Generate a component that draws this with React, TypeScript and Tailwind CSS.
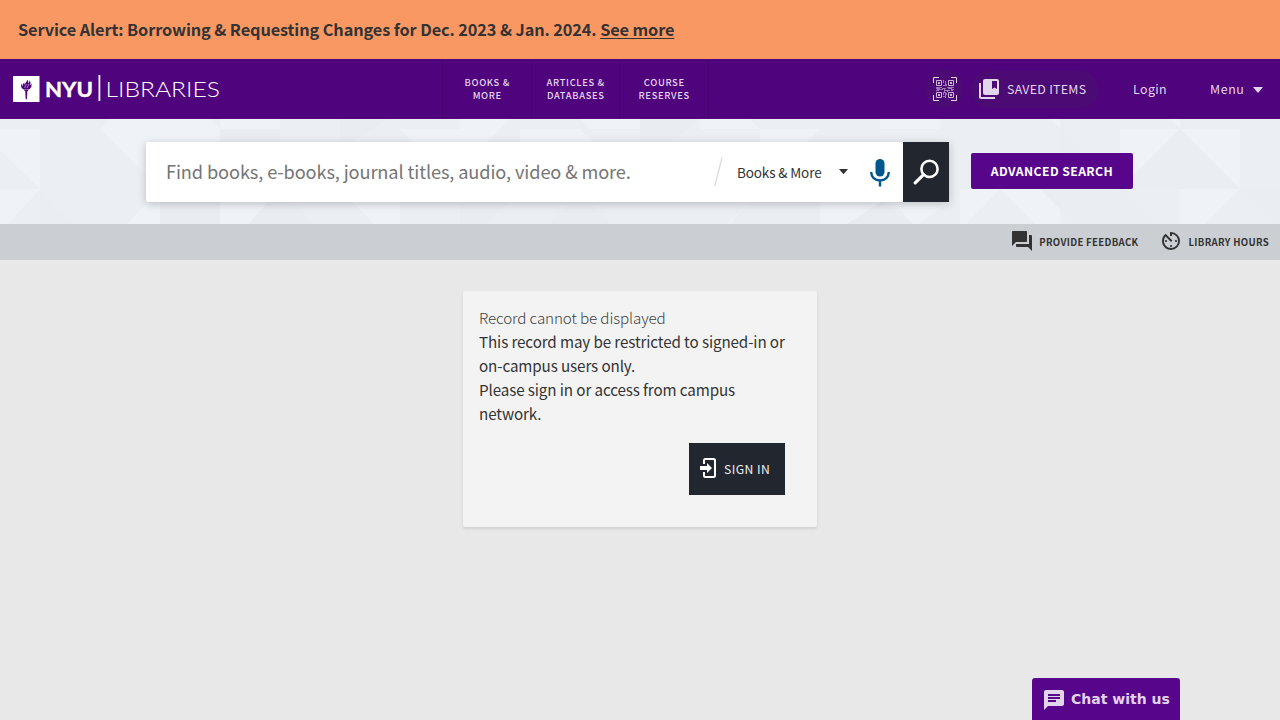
import { MdAvTimer, MdChat, MdCollectionsBookmark, MdForum } from "react-icons/md";

function Logo() {
  return (
    <svg width="208" height="28" viewBox="0 0 208 28" className="block" role="img" aria-label="NYU Libraries">
      <rect x="0" y="1" width="26.500" height="26" fill="#fff" />
      <g fill="#4f037c">
        <path d="M11 14.800h4.600l-.7 1.200h-.5l-.5 8.200h-1.200l-.5-8.200h-.5z" />
        <path d="M9 8.500c-1.500 1.500-1.300 4.500 1.600 6h5.400c2.500-1.500 3-3.800 2.400-6.500-.3 1.500-.9 2-1.500 2.300.9-2 .7-3.500-.3-5-.1 1.500-.6 2.400-1.500 3.100.3-1.500 0-2.700-1-3.600-.1 2.400-2.200 3.200-2.400 5-.5-.7-.5-1.500-.2-2.400-1.500 1-2 2.500-1.700 3.900-.8-.7-1-1.700-.8-2.800z" />
      </g>
      <path d="M11.500 13l2-4M14 13l2-4" stroke="#fff" strokeWidth=".5" />
      <text x="32" y="21.500" textLength="48" lengthAdjust="spacingAndGlyphs" fill="#fff" stroke="#fff" strokeWidth=".4" className="font-['Lato',sans-serif] text-[21px] font-bold">NYU</text>
      <rect x="85.500" y="0" width="1.800" height="26" fill="#fff" />
      <text x="92.500" y="21.500" textLength="114.500" lengthAdjust="spacingAndGlyphs" fill="#fff" className="font-['Lato',sans-serif] text-[21px] font-light">LIBRARIES</text>
    </svg>
  );
}

function QrIcon() {
  return (
    <svg width="24" height="24" viewBox="0 0 24 24" fill="none" stroke="#e3d6ec" className="block">
      <path d="M.5 6V.5H6M18 .5h5.500V6M.5 18v5.500H6M23.500 18v5.500H18" />
      <g opacity=".85">
        <path d="M3.500 3.500h5v5h-5zM15.500 3.500h5v5h-5zM3.500 15.500h5v5h-5zM15.500 15.500h5v5h-5z" />
        <path d="M5 6h2M17 6h2M5 18h2M17 18h2" strokeWidth="2" />
      </g>
      <path opacity=".55" d="M10.500 3v3M12.500 4v5M13.500 7v2M10 8.500h2M3 10.500h6M4 12.500h6M9 11.500h4M14 10.500h7M12 13.500h5M18 12.500h3M10.500 15v3M12.500 15v6M10 19.500h2M14.500 13v2M3 11.500h4M15 11.500h4M11.500 12v4M13.500 16v2M3 13.500h3M18 13.500h2" />
    </svg>
  );
}

function MicIcon() {
  return (
    <svg width="20" height="28" viewBox="0 0 20 28" className="block">
      <rect x="5.500" y="0" width="9" height="17.500" rx="4.500" fill="#00578d" />
      <path d="M1.200 13c0 5 3.600 8.500 8.800 8.500s8.800-3.500 8.800-8.500M10 21v6.500" fill="none" stroke="#00578d" strokeWidth="2.400" />
    </svg>
  );
}

function SearchIcon() {
  return (
    <svg width="26" height="26" viewBox="0 0 26 26" fill="none" stroke="#fff" className="block">
      <circle cx="16.500" cy="9.900" r="8.100" strokeWidth="2.600" />
      <path d="M10.500 15.700l-8.300 8.200" strokeWidth="3.200" strokeLinecap="round" />
    </svg>
  );
}

function SignInIcon() {
  return (
    <svg width="16" height="20" viewBox="0 0 16 20" className="mb-[2px] block">
      <path d="M4 6V2.500Q4 1 5.500 1h8Q15 1 15 2.500v15q0 1.500-1.500 1.500h-8Q4 19 4 17.500V14" fill="none" stroke="#fff" strokeWidth="2" />
      <path d="M0 8h7V5l5 5-5 5v-3H0z" fill="#fff" />
    </svg>
  );
}

function Pattern() {
  return (
    <svg width="1280" height="105" viewBox="0 119 1280 105" className="absolute inset-0">
      <path fill="#eff3f8" d="M0 129h40v60L0 150zM0 189h40L8 224H0zM110 119h100l10 10v60h-60l-20-20-40-40zM127 224l33-35v35zM220 189h60l34 35h-94zM340 189h60v35h-26zM460 119h50l-50 50zM520 129h60l60 60h-120zM220 119h60v10h-60zM400 129h60v60zM580 119h60v10h-50zM700 119h50l10 10h-60zM760 129h60l-60 60zM728 224l32-35h120v13h70l-32 22h-5l-33-35v35zM880 119h60v10h-60zM1120 129h120v60l-60-60-60 60zM960 189h40l-34 35h-6zM1000 189h60v35h-25zM1180 189h60l-35 35h-25zM1050 119h10v9zM1170 119h10v9z" />
      <path fill="#e9edf2" d="M160 202h60v22h-60zM280 189l34 35h-66zM220 130h60v30h-60zM340 119h50l-50 30zM640 119h60l-60 50zM460 202h50l-25 22h-25zM580 189l30 35h-60zM880 202l33 22h-66z" />
      <path fill="#eaedf2" d="M40 189l33 35H40zM760 189h60v35h-90zM1180 129l60 60h-120zM1040 189h80l35 35h-80zM1240 189h40v35h-5zM1060 129l60 60h-60z" />
    </svg>
  );
}

const navItems = [
  ["BOOKS &", "MORE"],
  ["ARTICLES &", "DATABASES"],
  ["COURSE", "RESERVES"],
];

export default function App() {
  return (
    <div className="relative flex h-[720px] w-[1280px] flex-col overflow-hidden bg-[#e8e8e8] font-['Noto_Sans_CJK_SC',sans-serif] text-[#333]">
      <div className="flex h-[59px] shrink-0 items-center bg-[#fa9864] pb-[2px] pl-[18px] text-[16.3px] leading-6 font-bold tracking-[-.1px] whitespace-pre">
        Service Alert: Borrowing &amp; Requesting Changes for Dec. 2023 &amp; Jan. 2024. <a className="underline decoration-1 underline-offset-2">See more</a>
      </div>

      <header className="flex h-[60px] shrink-0 items-center bg-[#4f037c] text-[#e3d6ec]">
        <div className="w-[442px] pl-[13px]"><Logo /></div>
        <nav className="flex h-full border-l border-[#470370]">
          {navItems.map(([a, b]) => (
            <a key={b} className="flex w-[88.500px] flex-col items-center justify-center border-r border-[#470370] pl-px text-[9.4px] leading-[13px] font-medium tracking-[.65px]">
              <span>{a}</span>
              <span>{b}</span>
            </a>
          ))}
        </nav>
        <div className="ml-auto flex h-full items-center">
          <button className="flex size-[38px] items-center justify-center rounded-full bg-[#4c0a74]"><QrIcon /></button>
          <button className="ml-[7px] flex h-[37px] w-[128px] items-center gap-[6px] rounded-full bg-[#4c0a74] pl-[6px] text-[12.4px] tracking-[.28px] whitespace-nowrap">
            <MdCollectionsBookmark size={24} />
            SAVED ITEMS
          </button>
          <a className="ml-[34px] w-[77px] text-[12.4px] tracking-[.4px]">Login</a>
          <a className="flex w-[70px] items-center gap-[9px] text-[12.4px] tracking-[.6px]">
            Menu
            <svg width="10" height="6" viewBox="0 0 10 6" className="mt-[3px]"><path d="M0 0h10L5 6z" fill="#e3d6ec" /></svg>
          </a>
        </div>
      </header>

      <section className="relative h-[105px] shrink-0 bg-[#ebeff4]">
        <Pattern />
        <div className="relative flex pt-[23px] pl-[146px]">
          <div className="flex h-[60px] w-[803px] items-center rounded-[2px] bg-white shadow-[0_2px_8px_rgba(0,0,0,.22)]">
            <span className="w-[568px] pb-[2px] pl-5 text-[18.2px] leading-6 tracking-[-.11px] text-[#757575]">Find books, e-books, journal titles, audio, video &amp; more.</span>
            <svg width="9" height="30" viewBox="0 0 9 30" className="block"><path d="M8 .5L.8 29" stroke="#dcdcdc" strokeWidth="1.300" /></svg>
            <span className="ml-[14px] w-[102px] text-[13.500px] leading-6 tracking-[-.12px]">Books &amp; More</span>
            <svg width="9" height="6" viewBox="0 0 9 6" className="block"><path d="M0 0h9L4.500 5.200z" fill="#333" /></svg>
            <span className="ml-[22px] w-[33px] pt-[1px]"><MicIcon /></span>
            <button className="flex h-full w-[46px] items-center justify-center bg-[#22262e]"><SearchIcon /></button>
          </div>
          <button className="mt-[11px] ml-[22px] h-9 w-[162px] rounded-[2px] bg-[#57068c] text-[12.2px] leading-9 font-bold tracking-[.42px] text-white">ADVANCED SEARCH</button>
        </div>
      </section>

      <div className="flex h-9 shrink-0 items-center justify-end bg-[#cbced3] pr-[11px] text-[9.6px] font-bold tracking-[.33px]">
        <a className="flex items-center gap-[5px]"><MdForum size={24} className="mb-[2px]" /><span className="pt-px">PROVIDE FEEDBACK</span></a>
        <a className="ml-[21px] flex items-center gap-[5px]"><MdAvTimer size={24} className="mb-[2px]" /><span className="pt-px">LIBRARY HOURS</span></a>
      </div>

      <main className="flex justify-center pt-[31px]">
        <section className="h-[236px] w-[354px] rounded-[2px] bg-[#f3f3f3] px-4 pt-[14px] text-[15.2px] leading-6 tracking-[-.11px] shadow-[0_2px_3px_rgba(0,0,0,.1)]">
          <h2 className="font-light text-[#3c3c3c]">Record cannot be displayed</h2>
          <p>This record may be restricted to signed-in or<br />on-campus users only.</p>
          <p>Please sign in or access from campus<br />network.</p>
          <div className="mt-[18px] mr-4 flex justify-end">
            <button className="flex h-[52px] w-24 items-center gap-2 bg-[#22262e] pl-[11px] text-[12.2px] tracking-[.45px] text-[#eee]">
              <SignInIcon />
              SIGN IN
            </button>
          </div>
        </section>
      </main>

      <button className="absolute bottom-0 left-[1032px] flex h-[42px] w-[148px] items-center gap-[5px] rounded-t-[3px] bg-[#57068c] pt-px pl-[10px] font-['DejaVu_Sans',sans-serif] text-[14px] font-bold whitespace-nowrap text-[#e3d4ee]">
        <MdChat size={24} />
        Chat with us
      </button>
    </div>
  );
}
